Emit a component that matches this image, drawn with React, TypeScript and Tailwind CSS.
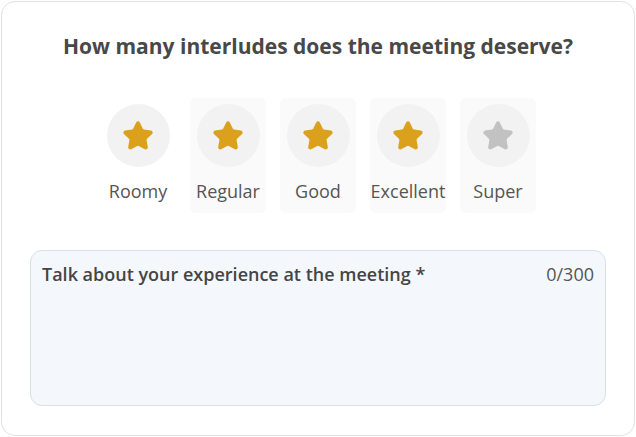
import React from "react";

const Star = ({ color }: { color: string }) => (
  <svg width="32" height="32" viewBox="0 0 24 24" fill={color} stroke={color} strokeWidth="2" strokeLinejoin="round" strokeLinecap="round">
    <path d="M11.525 2.295a.53.53 0 0 1 .95 0l2.31 4.679a2.123 2.123 0 0 0 1.595 1.16l5.166.756a.53.53 0 0 1 .294.904l-3.736 3.638a2.123 2.123 0 0 0-.611 1.878l.882 5.14a.53.53 0 0 1-.771.56l-4.618-2.428a2.122 2.122 0 0 0-1.973 0L6.396 21.01a.53.53 0 0 1-.77-.56l.881-5.139a2.122 2.122 0 0 0-.611-1.879L2.16 9.795a.53.53 0 0 1 .294-.906l5.165-.755a2.122 2.122 0 0 0 1.597-1.16z" />
  </svg>
);

const items = [
  { label: "Roomy", on: true, bg: false },
  { label: "Regular", on: true, bg: true },
  { label: "Good", on: true, bg: true },
  { label: "Excellent", on: true, bg: true },
  { label: "Super", on: false, bg: true },
];

export default function App() {
  return (
    <div className="p-px" style={{ fontFamily: '"Open Sans", "Noto Sans", sans-serif' }}>
      <div className="w-[634px] h-[435px] rounded-[14px] border border-[#e2e2e2] bg-white px-[28px] pt-[30px] flex flex-col">
        <h1 className="text-center text-[21px] leading-[28px] font-bold text-[#484848]">
          How many interludes does the meeting deserve?
        </h1>
        <div className="mt-[38px] flex justify-center gap-[14px]">
          {items.map((it) => (
            <div
              key={it.label}
              className={`w-[76px] h-[115px] rounded-[6px] flex flex-col items-center pt-[6px] ${it.bg ? "bg-[#fafafa]" : ""}`}
            >
              <div className="w-[63px] h-[63px] rounded-full bg-[#f2f2f2] flex items-center justify-center">
                <Star color={it.on ? "#dba11c" : "#c2c2c2"} />
              </div>
              <div className="mt-[12px] text-[18px] leading-[24px] text-[#555555] whitespace-nowrap">{it.label}</div>
            </div>
          ))}
        </div>
        <div className="mt-[37px] h-[156px] rounded-[12px] border border-[#dcdfe3] bg-[#f4f8fc] px-[11px] pt-[11px] flex justify-between items-start">
          <span className="text-[18px] leading-[24px] font-semibold text-[#454545]">
            Talk about your experience at the meeting *
          </span>
          <span className="text-[18px] leading-[24px] text-[#555555]">0/300</span>
        </div>
      </div>
    </div>
  );
}
